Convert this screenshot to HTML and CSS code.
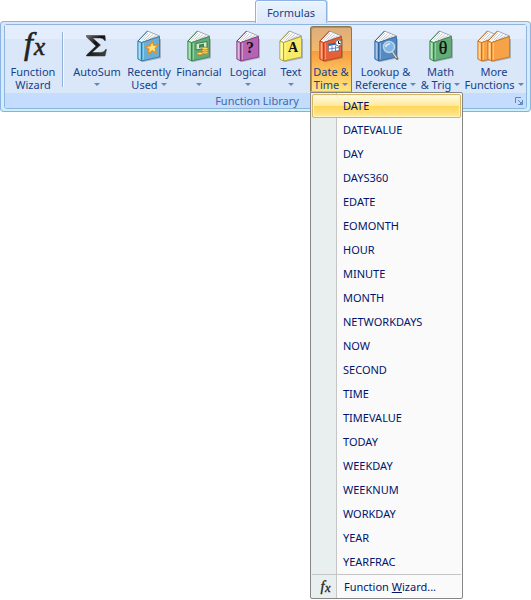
FILE: index.html
```html
<!DOCTYPE html>
<html lang="en">
<head>
<meta charset="utf-8">
<title>Formulas</title>
<link rel="stylesheet" href="styles.css">
</head>
<body>
<svg class="defs" aria-hidden="true">
  <defs>
    <linearGradient id="metal" x1="0" y1="0" x2="1" y2="1">
      <stop offset="0" stop-color="#777"/><stop offset=".4" stop-color="#111"/><stop offset="1" stop-color="#444"/>
    </linearGradient>
    <symbol id="book" viewBox="0 0 24 32">
      <path d="M5 31.500L23.500 27.500V9" fill="none" stroke="#000" stroke-opacity=".22" stroke-width="1.500"/>
      <path d="M1 11L10.500 1L22.500 6L4.500 12.500Z" fill="#fff" stroke="#7d8790" stroke-width=".7"/>
      <path d="M4 10.500L11 3M6.500 10.500L13.500 3.500M9 10L16 4.500M12.500 9L19 5.500" stroke="#a9b2b9" stroke-width=".7"/>
      <path class="spine" d="M.8 11L4.500 12.500V31L.8 29Z"/>
      <path class="cover" d="M4.500 12.500L22.500 6.500V27L4.500 31Z"/>
      <path class="rim" d="M1 11L10.500 1"/>
      <path d="M6.500 13V29.500M2.500 13V28.500" stroke="#fff" stroke-opacity=".45" stroke-width=".8"/>
    </symbol>
  </defs>
</svg>

<nav class="tabs"><button class="tab" type="button">Formulas</button></nav>

<main class="ribbon">
  <section class="group" aria-labelledby="group-title">
    <div class="tools">
      <div class="cell divided">
        <button class="tool" type="button">
          <svg class="icon" viewBox="0 0 24 32"><g class="fx"><text x="3" y="24" font-size="32">f</text><text x="13" y="25" font-size="25">x</text></g></svg>
          <span>Function</span><span>Wizard</span>
        </button>
      </div>
      <div class="cell">
        <button class="tool" type="button">
          <svg class="icon" viewBox="0 0 24 32"><path d="M1.500 5.500H20L20.500 10.500H19.500Q18.500 8 15.500 8H7.500L15.500 15L7 22.500H15.500Q19.500 22.500 20.500 19.500H21.500L20 26H1.500V25L11 16L1.500 7Z" fill="url(#metal)" stroke="#333" stroke-width=".5"/></svg>
          <span>AutoSum</span><span class="arrow-line"><i class="arrow"></i></span>
        </button>
      </div>
      <div class="cell">
        <button class="tool" type="button">
          <svg class="icon blue" viewBox="0 0 24 32"><use href="#book"/><path d="M15 11L16.800 15.300L21 15L18.200 18.500L19.300 23L15.300 20.800L11 24L12 19.200L8.500 17L13.200 15.800Z" fill="#ffe27a" stroke="#f08a18" stroke-width="1.200"/></svg>
          <span>Recently</span><span>Used<i class="arrow"></i></span>
        </button>
      </div>
      <div class="cell">
        <button class="tool" type="button">
          <svg class="icon green" viewBox="0 0 24 32"><use href="#book"/><path d="M9 13.500L20 11.500V18L9 20Z" fill="#d4ebca" stroke="#347c4b"/><path d="M12 14.500L17 13.500V17L12 18Z" fill="#438653"/><g fill="#ffdc61" stroke="#a96811" stroke-width=".7"><ellipse cx="13" cy="23.500" rx="3" ry="1.500"/><ellipse cx="18" cy="22.500" rx="3" ry="1.500"/><ellipse cx="18" cy="20.500" rx="3" ry="1.500"/><ellipse cx="18" cy="18.500" rx="3" ry="1.500"/></g></svg>
          <span>Financial</span><span class="arrow-line"><i class="arrow"></i></span>
        </button>
      </div>
      <div class="cell">
        <button class="tool" type="button">
          <svg class="icon purple" viewBox="0 0 24 32"><use href="#book"/><text class="glyph" x="14" y="23">?</text></svg>
          <span>Logical</span><span class="arrow-line"><i class="arrow"></i></span>
        </button>
      </div>
      <div class="cell">
        <button class="tool" type="button">
          <svg class="icon yellow" viewBox="0 0 24 32"><use href="#book"/><text class="glyph letter" x="14" y="22">A</text></svg>
          <span>Text</span><span class="arrow-line"><i class="arrow"></i></span>
        </button>
      </div>
      <div class="cell">
        <button class="tool active" type="button" aria-haspopup="menu" aria-expanded="true">
          <svg class="icon red" viewBox="0 0 24 32"><use href="#book"/><path d="M9.500 14L20 12.500V20.500L9.500 22Z" fill="#fff" stroke="#48618c" stroke-width=".6"/><path d="M9.500 15L18 13.500" stroke="#2f62b5" stroke-width="2"/><path d="M10 19L20 17.500M13 16V21.500M16.500 15.500V21" stroke="#6689bd"/><circle cx="19.500" cy="13" r="3" fill="#fff" stroke="#687581"/><path d="M19.500 11V13.500H21.500" fill="none" stroke="#111"/></svg>
          <span>Date &amp;</span><span>Time<i class="arrow"></i></span>
        </button>
        <div class="menu" role="menu">
          <button class="item selected" type="button" role="menuitem">DATE</button>
          <button class="item" type="button" role="menuitem">DATEVALUE</button>
          <button class="item" type="button" role="menuitem">DAY</button>
          <button class="item" type="button" role="menuitem">DAYS360</button>
          <button class="item" type="button" role="menuitem">EDATE</button>
          <button class="item" type="button" role="menuitem">EOMONTH</button>
          <button class="item" type="button" role="menuitem">HOUR</button>
          <button class="item" type="button" role="menuitem">MINUTE</button>
          <button class="item" type="button" role="menuitem">MONTH</button>
          <button class="item" type="button" role="menuitem">NETWORKDAYS</button>
          <button class="item" type="button" role="menuitem">NOW</button>
          <button class="item" type="button" role="menuitem">SECOND</button>
          <button class="item" type="button" role="menuitem">TIME</button>
          <button class="item" type="button" role="menuitem">TIMEVALUE</button>
          <button class="item" type="button" role="menuitem">TODAY</button>
          <button class="item" type="button" role="menuitem">WEEKDAY</button>
          <button class="item" type="button" role="menuitem">WEEKNUM</button>
          <button class="item" type="button" role="menuitem">WORKDAY</button>
          <button class="item" type="button" role="menuitem">YEAR</button>
          <button class="item" type="button" role="menuitem">YEARFRAC</button>
          <button class="item wizard" type="button" role="menuitem">
            <svg class="small-fx" viewBox="0 0 24 32"><g class="fx"><text x="3" y="23" font-size="29">f</text><text x="12" y="25" font-size="25">x</text></g></svg>
            <span>Function <u>W</u>izard...</span>
          </button>
        </div>
      </div>
      <div class="cell">
        <button class="tool" type="button">
          <svg class="icon navy" viewBox="0 0 24 32"><use href="#book"/><path d="M18.500 22L23 28.500" stroke="#71767b" stroke-width="3" stroke-linecap="round"/><path d="M18.500 22L22.500 28" stroke="#e1e4e6" stroke-width="1.200"/><circle cx="15" cy="17" r="5.500" fill="#84bdf0" fill-opacity=".85" stroke="#c7d2da" stroke-width="1.500"/><path d="M11.500 17Q12.500 13.500 16 14" fill="none" stroke="#d8efff" stroke-width="1.500"/></svg>
          <span>Lookup &amp;</span><span>Reference<i class="arrow"></i></span>
        </button>
      </div>
      <div class="cell">
        <button class="tool" type="button">
          <svg class="icon green" viewBox="0 0 24 32"><use href="#book"/><text class="glyph theta" x="14" y="24">θ</text></svg>
          <span>Math</span><span>&amp; Trig<i class="arrow"></i></span>
        </button>
      </div>
      <div class="cell">
        <button class="tool" type="button">
          <svg class="icon wide orange" viewBox="0 0 34 32"><use href="#book" width="24" height="32"/><use href="#book" x="10" width="24" height="32"/></svg>
          <span>More</span><span>Functions<i class="arrow"></i></span>
        </button>
      </div>
    </div>
    <footer class="caption">
      <span id="group-title">Function Library</span>
      <button class="launcher" type="button" aria-label="Function Library options"><svg viewBox="0 0 8 8"><path d="M.5 6V.5H6M3 3L6 6M7.500 3V7.500H3M5 6.500H6.500V5" fill="none" stroke="#5f86b8"/></svg></button>
    </footer>
  </section>
</main>
</body>
</html>
```
FILE: styles.css
```css
* { box-sizing: border-box; }

body {
  min-height: 100vh;
  margin: 0;
  background: #fff;
  color: #15428b;
  font: 11px/13px "Noto Sans", "Open Sans", sans-serif;
}

button {
  margin: 0;
  padding: 0;
  border: 0;
  background: none;
  color: inherit;
  font: inherit;
}

.defs { position: absolute; width: 0; height: 0; }

.tabs { display: flex; padding-left: 48%; }

.tab {
  position: relative;
  z-index: 1;
  height: 23px;
  margin-bottom: -2px;
  padding: 0 11px;
  border: 1px solid #8db2e3;
  border-bottom: 0;
  border-radius: 3px 3px 0 0;
  background: linear-gradient(#e9f3ff, #dce9fa);
  box-shadow: inset 1px 1px #f7fbff, 1px 0 #c9d9ed;
}

.ribbon {
  padding: 2px 3px;
  border: 1px solid #8db2e3;
  border-bottom-color: #87b3d1;
  border-radius: 4px;
  background: linear-gradient(#dce8f8, #c9f1fb);
}

.group {
  border: 1px solid #8fb4dd;
  border-radius: 3px;
  background: #dae7f8;
  box-shadow: inset 1px 1px #f5faff, inset -1px -1px #f5faff;
}

.tools {
  display: grid;
  grid-template-columns: 65fr 54fr 50fr 50fr 48fr 38fr 42fr 67fr 43fr 64fr;
  height: 68px;
  padding-top: 1px;
  background: linear-gradient(#e4edfb 14px, #dae7f8 14px);
}

.cell { position: relative; min-width: 0; }
.divided { padding-right: 9px; }

.divided::after {
  content: "";
  position: absolute;
  top: 6px;
  right: 6px;
  width: 2px;
  height: 55px;
  background: linear-gradient(90deg, #91b1dc 50%, #f4f9ff 50%);
}

.tool {
  display: flex;
  flex-direction: column;
  align-items: center;
  width: 100%;
  height: 66px;
  padding-top: 4px;
  white-space: nowrap;
}

.icon {
  flex: none;
  width: 24px;
  height: 32px;
  margin-bottom: 3px;
  overflow: visible;
}

.icon.wide { width: 34px; }

.arrow {
  display: inline-block;
  margin-left: 3px;
  border: solid transparent;
  border-width: 3px 3px 0;
  border-top-color: #6687b5;
  vertical-align: 3px;
}

.arrow-line .arrow { margin-left: 0; }

.active {
  border: 1px solid #8f7752;
  border-bottom-color: #e8bd58;
  border-radius: 3px 3px 0 0;
  background: linear-gradient(#dcae7c, #f5b86c 37%, #f79a3e 38%, #fdbd59 65%, #ffe57e);
  padding-top: 3px;
  box-shadow: inset 1px 1px #bd8957;
}

.cover { fill: var(--face); stroke: var(--edge); stroke-width: .8; }
.spine { fill: var(--side); stroke: var(--edge); stroke-width: .8; }
.rim { fill: none; stroke: var(--edge); stroke-width: 1; }
.blue { --face: #65afd9; --side: #8accec; --edge: #286e9f; }
.green { --face: #62ad75; --side: #91cf9b; --edge: #347c4b; }
.purple { --face: #b763b3; --side: #d58fce; --edge: #783477; }
.yellow { --face: #f7ec69; --side: #fff8a0; --edge: #a5972b; }
.red { --face: #e56038; --side: #f08258; --edge: #b43d20; }
.navy { --face: #508bc5; --side: #79aee0; --edge: #285d98; }
.orange { --face: #f8a248; --side: #ffc177; --edge: #c76a17; }

.fx {
  fill: #222;
  stroke: #222;
  stroke-width: .6;
  font-family: "Liberation Serif", serif;
  font-style: italic;
}

.glyph {
  fill: #111;
  font: bold 16px "Liberation Serif", serif;
  text-anchor: middle;
}

.letter { font-size: 14px; }
.theta { font-weight: normal; font-size: 18px; stroke: #111; stroke-width: .3; }

.caption {
  display: flex;
  align-items: center;
  height: 15px;
  padding-right: 3px;
  border-radius: 0 0 3px 3px;
  background: #c4dcfd;
  color: #3e6aaa;
}

.caption span { flex: 1; padding-right: 6px; text-align: center; }
.launcher { width: 8px; height: 8px; }
.launcher svg { display: block; width: 8px; height: 8px; }

.menu {
  position: absolute;
  z-index: 2;
  top: 100%;
  left: 0;
  width: 153px;
  margin-top: -1px;
  padding: 1px 1px 0;
  border: 1px solid #868686;
  border-radius: 0 2px 2px 2px;
  background: linear-gradient(90deg, #e9eeee 25px, #c5c5c5 25px, #c5c5c5 26px, #fafafa 26px);
  color: #00156e;
}

.item {
  display: block;
  width: 100%;
  height: 24px;
  padding: 0 0 1px 31px;
  text-align: left;
  white-space: nowrap;
}

.selected {
  padding-left: 30px;
  border: 1px solid #d4b666;
  border-radius: 2px;
  background: linear-gradient(#fffbe0, #ffe99c 48%, #ffd657 50%, #ffe795);
  box-shadow: inset 0 0 0 1px #fff4bd;
}

.wizard {
  display: flex;
  align-items: center;
  gap: 13px;
  padding: 0 0 0 7px;
  border-top: 1px solid #c5c5c5;
}

.small-fx { width: 12px; height: 16px; overflow: visible; }
```
